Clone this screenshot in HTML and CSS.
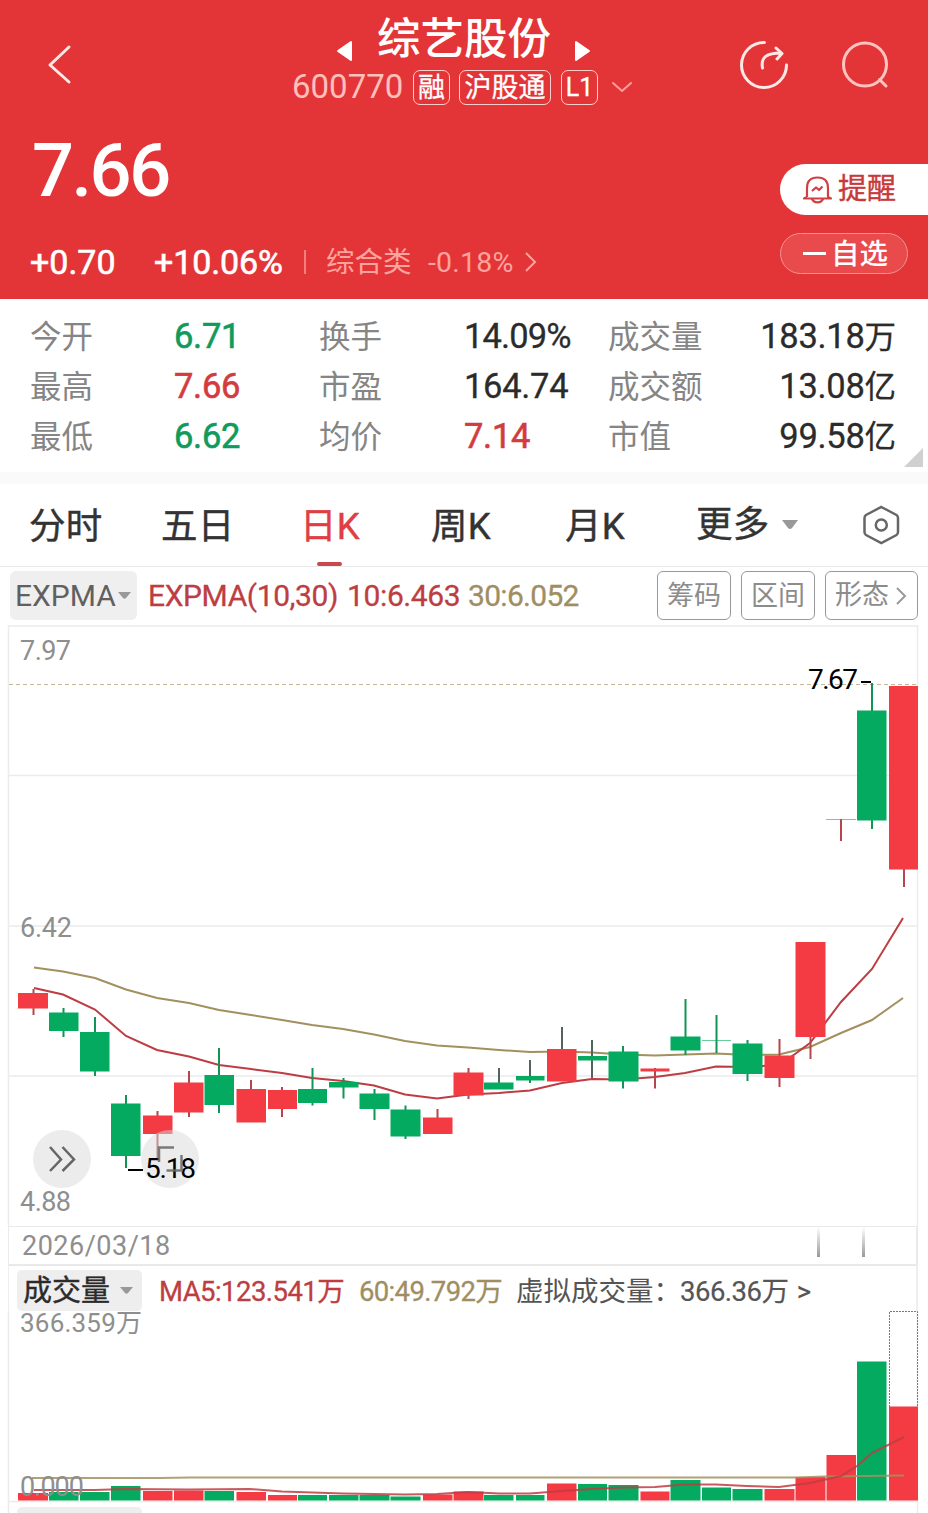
FILE: index.html
```html
<!DOCTYPE html>
<html lang="zh-CN">
<head>
<meta charset="utf-8">
<title>综艺股份 600770</title>
<link rel="stylesheet" href="styles.css">
</head>
<body>
<header class="hero">
  <div class="nav">
    <svg class="back" width="28" height="44" viewBox="46 43 28 44"><path d="M69 47 L50 65 L69 82"/></svg>
    <div class="title">
      <div class="name-row">
        <svg width="18" height="24" viewBox="0 0 18 24"><path d="M15 3 V21 L2 12Z"/></svg>
        <h1>综艺股份</h1>
        <svg width="18" height="24" viewBox="0 0 18 24"><path d="M3 3 V21 L16 12Z"/></svg>
      </div>
      <div class="code-row">
        <span class="code">600770</span><span class="tag t1">融</span><span class="tag t2">沪股通</span><span class="tag t3">L1</span>
        <svg class="chev" width="22" height="14" viewBox="0 0 22 14"><path d="M2 3 L11 11 L20 3"/></svg>
      </div>
    </div>
    <svg class="share" width="54" height="54" viewBox="737 38 54 54"><path d="M764.500 42.500 A22.500 22.500 0 1 0 786.500 65 M762.500 68 C760.500 57 767 53 781 53 M776 48 L782 53.500 L777 59"/></svg>
    <svg class="search" width="54" height="54" viewBox="838 38 54 54"><circle cx="865" cy="64.500" r="21.500"/><path d="M879.500 79.500 L886 86"/></svg>
  </div>
  <div class="price-row">
    <strong class="price">7.66</strong>
    <button class="remind">
      <svg width="30" height="32" viewBox="802 173 30 32"><path d="M807 197 V188 C807 180 812 177.500 817.500 177.500 S828 180 828 188 V197 L831 198.500 H804 L807 197 M812 199 C814 203.500 821 203.500 823 199 M812 191 L816 187.500 L819 190 L822.500 186.500"/></svg>
      <span>提醒</span>
    </button>
  </div>
  <div class="change-row">
    <span class="chg">+0.70</span><span class="pct">+10.06%</span><i class="sep"></i><span class="sector">综合类</span><span class="sector-pct">-0.18%</span>
    <svg class="more" width="14" height="22" viewBox="0 0 14 22"><path d="M2 2 L11 11 L2 20"/></svg>
    <button class="fav"><i></i><span>自选</span></button>
  </div>
</header>

<section class="stats">
  <span class="lab">今开</span><span class="val green">6.71</span><span class="lab">换手</span><span class="val">14.09%</span><span class="lab">成交量</span><span class="val end">183.18<b>万</b></span>
  <span class="lab">最高</span><span class="val red">7.66</span><span class="lab">市盈</span><span class="val">164.74</span><span class="lab">成交额</span><span class="val end">13.08<b>亿</b></span>
  <span class="lab">最低</span><span class="val green">6.62</span><span class="lab">均价</span><span class="val red">7.14</span><span class="lab">市值</span><span class="val end">99.58<b>亿</b></span>
  <svg class="corner" width="19" height="19"><path d="M19 0 V19 H0Z"/></svg>
</section>
<div class="band"></div>

<nav class="tabs">
  <span>分时</span><span>五日</span><span class="on">日K</span><span>周K</span><span>月K</span><span class="drop">更多<svg width="18" height="12"><path d="M1 1 H17 L11 9 Q9 11 7 9Z"/></svg></span>
  <svg class="gear" width="38" height="42" viewBox="862 504 38 42"><path d="M881.300 507 L896.500 515 Q898 516 898 518 V532 Q898 534 896.500 535 L881.300 543 L866 535 Q864.500 534 864.500 532 V518 Q864.500 516 866 515Z"/><circle cx="881.300" cy="525" r="5.500"/></svg>
</nav>

<section class="indicator">
  <span class="pill">EXPMA<svg width="13" height="8"><path d="M0 0 H13 L8 6 Q6.500 7.500 5 6Z"/></svg></span>
  <span class="ema10">EXPMA(10,30) 10:6.463</span>
  <span class="ema30">30:6.052</span>
  <span class="box">筹码</span><span class="box">区间</span><span class="box wide">形态<svg width="12" height="20"><path d="M2 2 L10 10 L2 18"/></svg></span>
</section>

<svg class="chart" width="928" height="601" viewBox="0 625 928 601">
  <g class="grid"><path d="M8 626 H918 M8 775.500 H918 M8 926 H918 M8 1076 H918 M8.500 625 V1226 M917.500 625 V1226"/></g>
  <path class="last" d="M9 684.500 H918"/>
  <g class="axis"><text x="20" y="660" textLength="51">7.97</text><text x="20" y="937" textLength="52">6.42</text><text x="20" y="1211" textLength="51">4.88</text></g>
  <polyline class="gold-line" points="34,967.5 63,971.5 95,978 126,989.5 157,998 189,1003 219,1010 251,1015 282,1020 312,1025 343,1029 374,1034.5 405,1041 437,1045.500 468,1047.500 499,1050 530,1052 562,1051.5 592,1052.5 623,1054.5 655,1055.5 685,1054.5 716,1053.5 747,1055 779,1054.5 810,1047 841,1033 872,1020 903,998"/>
  <polyline class="red-line" points="34,988 63,994.5 95,1009.5 126,1036 157,1050 189,1056.5 219,1065 251,1069 282,1073 312,1078 343,1081 374,1085.5 405,1094.5 437,1098.5 468,1094.5 499,1093 530,1090.5 562,1083 592,1079 623,1079.5 655,1077 685,1073 716,1066.5 747,1067 779,1065 795,1054 810,1043 841,1002 872,969 903,918"/>
  <g class="r">
    <path d="M33.500 989V1015 M157.500 1111V1160 M189 1071V1117 M251 1080V1122 M282 1087V1117 M437.500 1109V1134 M468.500 1068V1099 M655 1068V1088.500 M779.500 1039V1087 M810.500 942V1059 M841 819V841 M904 686V887"/>
    <rect x="18" y="993" width="30" height="15.500"/><rect x="143" y="1115.500" width="29.500" height="18.500"/><rect x="174" y="1082.500" width="29.500" height="30"/><rect x="236.500" y="1089" width="29.500" height="33.500"/><rect x="268" y="1090" width="29" height="19"/><rect x="423" y="1117.500" width="29.500" height="16.500"/><rect x="453.500" y="1072.500" width="30" height="23"/><rect x="547" y="1049" width="29.500" height="32.500"/><rect x="640.500" y="1068.500" width="29" height="3"/><rect x="764.500" y="1055.500" width="30" height="22.500"/><rect x="795.500" y="942" width="30" height="95"/><rect class="thin" x="826" y="819" width="30" height="1"/><rect x="889" y="686" width="29" height="183.500"/>
  </g>
  <g class="g">
    <path d="M63.500 1008V1037 M95 1017V1076 M126 1095V1168 M219 1048V1113 M312.500 1068V1105.500 M343.500 1078V1098.500 M374.500 1089V1120 M405.500 1105.500V1139 M499 1068V1089 M530 1060V1083 M592 1040V1078 M623 1046V1088.500 M685.500 999V1055 M716.500 1015V1053 M747.500 1040V1081 M872 683V829"/>
    <rect x="49" y="1012.500" width="29.500" height="18.500"/><rect x="80" y="1032" width="29.500" height="39.500"/><rect x="111" y="1103.500" width="29.500" height="52.500"/><rect x="204.500" y="1075" width="29.500" height="30"/><rect x="298" y="1089" width="29" height="14"/><rect x="329" y="1082" width="29.500" height="5.500"/><rect x="359.500" y="1093.500" width="30" height="15.500"/><rect x="390.500" y="1109.500" width="30" height="27"/><rect x="484" y="1082.500" width="29.500" height="7"/><rect x="516" y="1076" width="28.500" height="4.500"/><rect x="578" y="1056" width="29" height="4.500"/><rect x="608.500" y="1051.500" width="30" height="30"/><rect x="670.500" y="1036.500" width="30" height="14"/><rect class="thin" x="702" y="1040" width="29" height="1"/><rect x="732.500" y="1043.500" width="30" height="30.500"/><rect x="857" y="710.500" width="29.500" height="110"/>
  </g>
  <path class="dark-wick" d="M499 1068V1082 M530 1060V1076 M562 1027V1049 M592 1040V1056 M592 1060.500V1078"/>
  <g class="float"><circle cx="62" cy="1159" r="29"/><circle cx="170" cy="1159" r="29"/><path d="M50 1147 L61 1159.500 L50 1171 M62.500 1147 L74 1159.500 L62.500 1171"/></g>
  <g class="mark"><text x="808" y="689" textLength="50">7.67</text><path d="M861 682 H871 M128 1170 H143"/><text x="145" y="1178" textLength="51">5.18</text></g>
  <path class="corners" d="M174 1147.500 H159 V1162 M166.500 1170.500 H181.500 V1155"/>
</svg>

<section class="date-row">
  <span>2026/03/18</span><i></i><i></i>
</section>

<section class="vol-head">
  <span class="vol-pill">成交量<svg width="13" height="8"><path d="M0 0 H13 L8 6 Q6.500 7.500 5 6Z"/></svg></span>
  <span class="ma5">MA5:123.541万</span><span class="ma60">60:49.792万</span><span class="virt">虚拟成交量：</span><span class="virt-num">366.36万 &gt;</span>
</section>

<svg class="volume" width="928" height="202" viewBox="0 1311 928 202">
  <path class="frame" d="M8.500 1311V1513 M917.500 1311V1513 M8 1501.500H918"/>
  <path class="forecast" d="M889.500 1407 V1311.500 H917.500 V1407"/>
  <text class="max" x="20" y="1332" textLength="122">366.359万</text>
  <g class="r"><path class="bars" d="M18 1493h30v7.500h-30z M143 1491h29.500v9.500h-29.500z M174 1490.500h29.500v10h-29.500z M236.500 1492h29.500v8.500h-29.500z M268 1495h29v5.500h-29z M423 1494.500h29.500v6h-29.500z M453.500 1491.500h30v9h-30z M547 1483.500h29.500v17h-29.500z M640.500 1491.500h29v9h-29z M764.500 1489h30v11.500h-30z M795.500 1477h30v23.500h-30z M826.500 1455h29.500v45.500h-29.500z M889 1406.500h29v94h-29z"/></g>
  <g class="g"><path class="bars" d="M49 1492h29.500v8.500h-29.500z M80 1492h29.500v8.500h-29.500z M111 1486h29.500v14.500h-29.500z M204.500 1491h29.500v9.500h-29.500z M298 1495h29v5.500h-29z M329 1495h29.500v5.500h-29.500z M359.500 1495h30v5.500h-30z M390.500 1496.500h30v4h-30z M484 1495h29.500v5.500h-29.500z M516 1495h28.500v5.500h-28.500z M578 1484h29v16.500h-29z M608.500 1485h30v15.500h-30z M670.500 1480h30v20.500h-30z M702 1487.500h29v13h-29z M732.500 1489h30v11.500h-30z M857 1361.500h29.500v139h-29.500z"/></g>
  <polyline class="gold-line" points="32,1478 160,1478 190,1477.5 795,1477.5 825,1476.5 904,1475.5"/>
  <polyline class="red-line" points="34,1490 95,1490 126,1489 189,1489.500 250,1489 282,1491.500 343,1493.500 405,1494.500 437,1494 468,1492 499,1493.500 530,1493.500 562,1491 592,1489 623,1487.500 655,1487 685,1484.500 716,1484.500 747,1486 779,1487 810,1483 841,1476 857,1466 872,1453 904,1437"/>
  <text class="zero" x="20" y="1496" textLength="64">0.000</text>
  <rect class="next" x="17" y="1507" width="125" height="20" rx="5"/>
</svg>
</body>
</html>
```

FILE: styles.css
```css
* { box-sizing: border-box; }
body { margin: 0; width: 928px; height: 1513px; overflow: hidden; background: #fff; font-family: Roboto, "Noto Sans CJK SC", sans-serif; color: #2b2b2b; }
svg { display: block; flex: none; }
span, strong { white-space: nowrap; }
button { font: inherit; margin: 0; padding: 0; border: 0; }

.hero { height: 299px; background: #e33538; color: #fff; overflow: hidden; }
.nav { display: flex; height: 120px; }
.nav svg path, .nav svg circle { fill: none; stroke: #ffe9e6; stroke-width: 3; stroke-linecap: round; stroke-linejoin: round; }
.back { margin: 43px 0 0 46px; }
.title { width: 344px; margin-left: 218px; }
.name-row { display: flex; height: 66px; padding-left: 44px; }
.name-row h1 { width: 176px; margin: 0 20px 0 23px; font-size: 43.5px; font-weight: 500; line-height: 79px; height: 66px; white-space: nowrap; }
.name-row svg { margin-top: 39px; }
.name-row svg path { fill: #fff; stroke: #fff; stroke-width: 2; }
.code-row { display: flex; align-items: center; height: 42px; }
.code { width: 121px; font-size: 33px; color: #ffc0bc; line-height: 44px; }
.tag { height: 35px; border: 1.5px solid #ffcfcc; border-radius: 7px; text-align: center; font-size: 27px; line-height: 34px; font-weight: 400; -webkit-text-stroke: .3px; }
.t1 { width: 37px; }
.t2 { width: 92px; margin-left: 9px; }
.t3 { width: 37px; margin-left: 10px; font-size: 25px; }
.nav .chev { margin-left: 13px; }
.nav .chev path { stroke: #ff9d99; stroke-width: 2; }
.share { margin: 38px 0 0 100px; }
.nav .share { margin-left: 101px; }
.search { margin: 38px 0 0 47px; }
.nav .search circle, .nav .search path { stroke: #ffc4c0; }
.price-row { display: flex; justify-content: space-between; height: 108px; padding-left: 32px; }
.price { font-size: 74px; font-weight: 500; line-height: 102px; letter-spacing: -2.500px; }
.remind { display: flex; align-items: center; width: 148px; height: 51px; margin-top: 43.500px; padding-left: 22px; background: #fff; border-radius: 26px 0 0 26px; color: #c8393c; font-size: 29px; font-weight: 400; -webkit-text-stroke: .4px; }
.remind span { margin-left: 6px; line-height: 51px; height: 51px; }
.remind path { fill: none; stroke: #cf4043; stroke-width: 2.200; stroke-linejoin: round; }
.change-row { display: flex; align-items: center; height: 68px; padding-left: 30px; font-size: 34px; -webkit-text-stroke: .6px; }
.chg { width: 124px; }
.pct { width: 150px; letter-spacing: -.1px; }
.sep { width: 2px; height: 24px; margin-right: 20px; background: #f07f7e; }
.sector { width: 102px; height: 40px; line-height: 42px; font-size: 28.5px; color: #ffa39f; -webkit-text-stroke: 0; }
.sector-pct { width: 96px; font-size: 28.5px; letter-spacing: .2px; color: #ffa39f; -webkit-text-stroke: 0; }
.more path { fill: none; stroke: #ffa39f; stroke-width: 2; }
.fav { display: flex; align-items: center; width: 128px; height: 41px; margin: -17px 0 0 242px; border: 1.500px solid #f39290; border-radius: 21px; background: #e94b4c; color: #fff; font-size: 28.500px; font-weight: 500; padding-left: 22px; -webkit-text-stroke: 0; }
.fav i { width: 23px; height: 2.500px; background: #fff; margin-right: 5px; }
.fav span { line-height: 44px; height: 41px; }

.stats { position: relative; display: grid; grid-template-columns: 144px 145px 145px 144px 105px 183px; grid-auto-rows: 50px; height: 173px; padding: 12px 0 0 30px; line-height: 50px; }
.lab { font-size: 31.500px; color: #858585; line-height: 54px; }
.val { font-size: 34.500px; letter-spacing: -.3px; line-height: 51px; -webkit-text-stroke: .3px; }
.lab + .val:nth-child(4) { letter-spacing: -.9px; }
.val b { font: 400 31.500px "Noto Sans CJK SC"; line-height: 1; letter-spacing: 0; }
.val.end { text-align: right; }
.green { color: #109a5c; -webkit-text-stroke: .6px; }
.red { color: #d23c3f; -webkit-text-stroke: .6px; }
.corner { position: absolute; right: 5px; bottom: 5px; fill: #d0d0d0; }
.band { height: 12px; background: #fafafa; }

.tabs { display: flex; height: 83px; border-bottom: 1px solid #eaeaea; padding-left: 29px; font: 400 36.500px/86px Roboto, "Noto Sans CJK SC", sans-serif; color: #333; -webkit-text-stroke: .4px; }
.tabs span { width: 134px; height: 82px; letter-spacing: .3px; }
.tabs span:nth-child(2) { width: 139px; margin-left: -2px; }
.tabs .on { position: relative; width: 131px; color: #df3e43; }
.tabs .on::after { content: ""; position: absolute; left: 17px; bottom: 0; width: 25px; height: 4px; border-radius: 2px; background: #c9484e; }
.tabs span:nth-child(5) { width: 131px; }
.tabs .drop { display: flex; align-items: center; width: 166px; gap: 11px; }
.drop path { fill: #999; }
.tabs .gear { margin: 20px 0 0; }
.gear path, .gear circle { fill: none; stroke: #666; stroke-width: 2.500; }

.indicator { display: flex; height: 58px; padding: 4px 10px 0; font-size: 30px; line-height: 49px; }
.pill { display: flex; align-items: center; width: 127px; height: 49px; padding-left: 5px; background: #efefef; border-radius: 6px; color: #606060; gap: 2px; }
.pill path, .vol-pill path { fill: #999; }
.ema10 { margin-left: 11px; width: 320px; color: #bd3e42; letter-spacing: -.4px; word-spacing: 2px; -webkit-text-stroke: .3px; }
.ema30 { width: 189px; color: #a08e62; letter-spacing: -.7px; -webkit-text-stroke: .3px; }
.box { width: 74px; height: 49px; border: 1.500px solid #999; border-radius: 6px; color: #8c8c8c; text-align: center; font-size: 27px; line-height: 49px; margin-right: 10px; }
.wide { width: 93px; margin-right: 0; display: flex; align-items: center; padding-left: 9px; gap: 6px; flex: none; }
.wide path { fill: none; stroke: #999; stroke-width: 2; }

.grid path, .frame { stroke: #ececec; stroke-width: 1.500; fill: none; }
.last { stroke: #c4b898; stroke-dasharray: 4 3; }
.axis text, .max, .zero { font-size: 27px; fill: #8e8e8e; }
.volume .max { font-size: 26px; }
.volume { overflow: visible; }
.gold-line, .red-line { fill: none; stroke-width: 2; stroke: #a3905f; }
.red-line { stroke: #bd3d43; }
.r { fill: #f43a42; stroke: none; }
.g { fill: #04aa5f; }
.r > path:not(.bars) { stroke: #b3474d; stroke-width: 2; }
.g > path:not(.bars) { stroke: #139354; stroke-width: 2; }
.dark-wick { stroke: #52655c; stroke-width: 2; }
.thin { opacity: .6; }
.float circle { fill: #d9d9d9; opacity: .5; }
.float path { fill: none; stroke: #666; stroke-width: 2.500; }
.corners { fill: none; stroke: #666; stroke-width: 2.500; opacity: .85; }
.mark text { font-size: 28px; fill: #000; }
.mark path { stroke: #000; stroke-width: 2; }

.date-row { display: flex; height: 39px; margin: 0 10px 0 8px; border: 1px solid #eaeaea; border-right-width: 2px; padding-left: 13px; font-size: 27px; line-height: 38px; color: #8e8e8e; }
.date-row span { width: 795px; letter-spacing: .5px; }
.date-row i { width: 3px; height: 30px; margin-right: 42px; background: linear-gradient(#fff, #999); flex: none; }
.vol-head { display: flex; height: 46px; margin: 0 10px 0 8px; border-left: 1px solid #eee; border-right: 2px solid #eee; border-top: 1px solid #e8e8e8; padding: 4px 0 0 8px; font-size: 27.500px; line-height: 44px; }
.vol-pill { display: flex; align-items: center; justify-content: space-between; width: 125px; height: 41px; padding: 0 9px 0 6px; font-size: 29px; line-height: 42px; background: #eee; border-radius: 5px; -webkit-text-stroke: .4px; }
.ma5 { width: 200px; margin-left: 17px; color: #bd3e42; letter-spacing: -.55px; -webkit-text-stroke: .3px; }
.ma60 { width: 157px; color: #a08e62; letter-spacing: -.65px; -webkit-text-stroke: .3px; }
.virt { width: 164px; color: #555; }
.virt-num { color: #555; letter-spacing: -.5px; word-spacing: 2px; -webkit-text-stroke: .2px; }
.forecast { fill: none; stroke: #777; stroke-dasharray: 2 1; }
.volume .red-line, .volume .gold-line { opacity: .85; }
.next { fill: #eee; }
```
